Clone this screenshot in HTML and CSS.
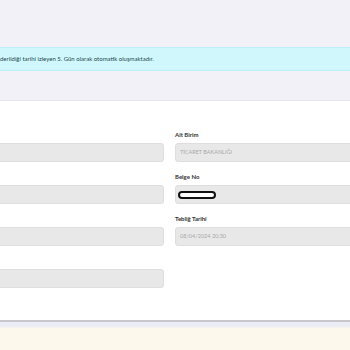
FILE: index.html
```html
<!DOCTYPE html>
<html lang="tr">
<head>
  <meta charset="UTF-8" />
  <meta name="viewport" content="width=device-width, initial-scale=1.0"/>
  <title>Belge Detayı</title>
  <link rel="stylesheet" href="styles.css">
</head>
<body>

  <section class="ust-alan">
    <div class="bilgi-kutusu">
      derildiği tarihi izleyen 5. Gün olarak otomatik oluşmaktadır.
    </div>
  </section>

  <section class="form-kart">
    <div class="form-grid">
      <!-- Sol sütun -->
      <div class="alan">
        <label>Birim</label>
        <div class="girdi"></div>
      </div>
      <div class="alan">
        <label>Alt Birim</label>
        <div class="girdi">TİCARET BAKANLIĞI</div>
      </div>

      <div class="alan">
        <label>Belge Tarihi</label>
        <div class="girdi"></div>
      </div>
      <div class="alan">
        <label>Belge No</label>
        <div class="girdi">
          <span class="karalama"></span>
        </div>
      </div>

      <div class="alan">
        <label>Konu</label>
        <div class="girdi"></div>
      </div>
      <div class="alan">
        <label>Tebliğ Tarihi</label>
        <div class="girdi">08/04/2024 20:30</div>
      </div>

      <div class="alan">
        <label>Açıklama</label>
        <div class="girdi"></div>
      </div>
    </div>
  </section>

  <section class="alt-alan"></section>

</body>
</html>
```

FILE: styles.css
```css
body {
  font-family: Lato, "Open Sans", sans-serif;
  background-color: #f2f1f7;
  margin: 0;
  overflow: hidden;
}
.ust-alan {
  height: 101px;
  padding-top: 47px;
  box-sizing: border-box;
  border-bottom: 1px solid #e6e5ec;
}
.bilgi-kutusu {
  height: 24px;
  box-sizing: border-box;
  background-color: #d0f8fc;
  border-top: 1px solid #bdeff6;
  border-bottom: 1px solid #bdeff6;
  font-size: 6px;
  color: #24474d;
  line-height: 22px;
  padding-left: 0;
  white-space: nowrap;
}
.form-kart {
  background-color: #ffffff;
  height: 221px;
  padding-top: 29px;
  box-sizing: border-box;
  border-bottom: 2px solid #c8c8cc;
  overflow: hidden;
}
.form-grid {
  display: grid;
  grid-template-columns: 340px 340px;
  column-gap: 11px;
  row-gap: 10px;
  margin-left: -176px;
}
.alan label {
  display: block;
  font-size: 6px;
  font-weight: bold;
  color: #333;
  height: 9px;
  line-height: 9px;
  margin-bottom: 4px;
}
.girdi {
  height: 19px;
  box-sizing: border-box;
  background-color: #e8e8e8;
  border: 1px solid #dedede;
  border-radius: 3px;
  padding-left: 4px;
  font-size: 5.5px;
  color: #a8a8a8;
  line-height: 17px;
  display: flex;
  align-items: center;
}
.karalama {
  display: block;
  width: 38px;
  height: 8px;
  box-sizing: border-box;
  border: 2px solid #111;
  border-radius: 5px;
  background-color: #fff;
  margin-left: -2px;
}
.alt-alan {
  height: 40px;
  background: linear-gradient(#ececf4 0, #ececf4 5px, #fdf8ec 6px);
}
```
